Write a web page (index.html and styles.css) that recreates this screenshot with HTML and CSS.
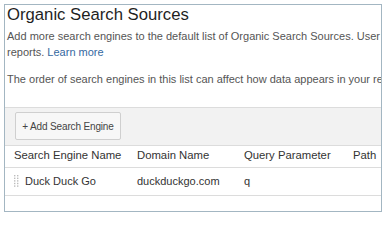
FILE: index.html
```html
<!DOCTYPE html>
<html>
<head>
<meta charset="utf-8">
<link rel="stylesheet" href="styles.css">
</head>
<body>
<div class="panel">
  <h1 class="title">Organic Search Sources</h1>
  <p class="intro"><span class="line">Add more search engines to the default list of Organic Search Sources. User</span><span class="line">reports. <a class="link" href="#">Learn more</a></span></p>
  <p class="note"><span class="line">The order of search engines in this list can affect how data appears in your re</span></p>
  <div class="toolbar">
    <button class="btn">+ Add Search Engine</button>
  </div>
  <div class="table">
    <div class="row head">
      <div class="c1">Search Engine Name</div>
      <div class="c2">Domain Name</div>
      <div class="c3">Query Parameter</div>
      <div class="c4">Path</div>
    </div>
    <div class="row data">
      <div class="c1"><svg class="handle" width="5" height="12" viewBox="0 0 5 12"><g fill="#bdbdbd"><rect x="0" y="0" width="1.4" height="1.4"/><rect x="3" y="0" width="1.4" height="1.4"/><rect x="0" y="2.6" width="1.4" height="1.4"/><rect x="3" y="2.6" width="1.4" height="1.4"/><rect x="0" y="5.2" width="1.4" height="1.4"/><rect x="3" y="5.2" width="1.4" height="1.4"/><rect x="0" y="7.8" width="1.4" height="1.4"/><rect x="3" y="7.8" width="1.4" height="1.4"/><rect x="0" y="10.4" width="1.4" height="1.4"/><rect x="3" y="10.4" width="1.4" height="1.4"/></g></svg><span class="name">Duck Duck Go</span></div>
      <div class="c2">duckduckgo.com</div>
      <div class="c3">q</div>
      <div class="c4"></div>
    </div>
  </div>
</div>
</body>
</html>
```
FILE: styles.css
```css
html, body {
  margin: 0;
  padding: 0;
  background: #ffffff;
}
body {
  font-family: "Liberation Sans", Arial, sans-serif;
  color: #333;
}
.panel {
  margin: 4px 0 0 4px;
  width: 376px;
  height: 206px;
  border: 1px solid #a3b6c2;
  overflow: hidden;
  background: #fff;
}
.title {
  margin: 0;
  padding: 0 0 0 2px;
  font-size: 16.7px;
  line-height: 20px;
  font-weight: normal;
  color: #1f1f1f;
}
.intro, .note {
  margin: 3px 0 0;
  padding-left: 2px;
  font-size: 11px;
  line-height: 16px;
  color: #555;
}
.note {
  margin-top: 11px;
}
.line {
  display: block;
  white-space: nowrap;
}
.link {
  color: #35689f;
  text-decoration: none;
}
.toolbar {
  margin-top: 20px;
  border-top: 1px solid #dcdcdc;
  border-bottom: 1px solid #dcdcdc;
  background: #f2f2f2;
  padding: 4px 0 5px 10px;
}
.btn {
  display: block;
  width: 106px;
  height: 28px;
  padding: 0;
  border: 1px solid #cfcfcf;
  border-radius: 2px;
  background: #f7f7f7;
  font-family: "Liberation Sans", Arial, sans-serif;
  font-size: 10px;
  color: #444;
  letter-spacing: -0.15px;
}
.row {
  display: flex;
  border-bottom: 1px solid #dcdcdc;
}
.row > div {
  padding-left: 9px;
  box-sizing: border-box;
  white-space: nowrap;
}
.c1 { width: 123px; }
.c2 { width: 107px; }
.c3 { width: 109px; }
.c4 { flex: 1; }
.head > div {
  font-size: 11.3px;
  line-height: 14px;
  padding-top: 2px;
  padding-bottom: 5px;
  color: #333;
}
.data > div {
  font-size: 11px;
  line-height: 14px;
  padding-top: 6px;
  padding-bottom: 7px;
  color: #333;
}
.data .c1 {
  display: flex;
  align-items: center;
}
.handle {
  display: block;
  margin-right: 6px;
  flex: none;
}
```
